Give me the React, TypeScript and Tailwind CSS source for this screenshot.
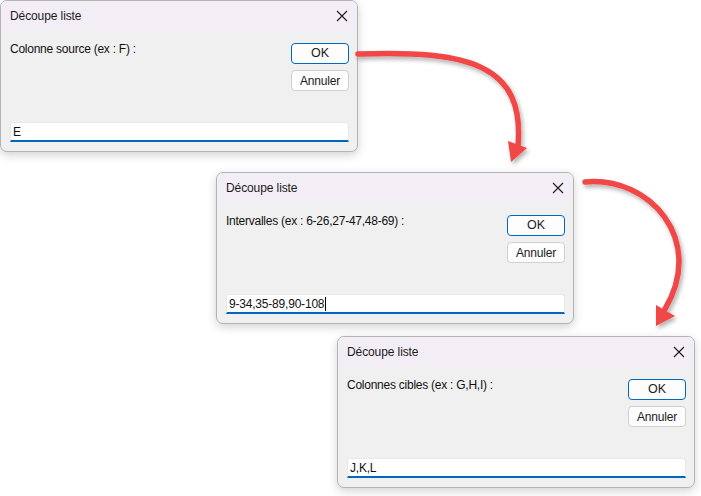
import React from "react";

type DialogProps = {
  pos: string;
  label: string;
  value: string;
  caret?: boolean;
};

function Dialog({ pos, label, value, caret }: DialogProps) {
  return (
    <div
      className={`absolute ${pos} w-[358px] h-[152px] flex flex-col rounded-[7px] border border-[#b4b4b4] bg-[#f0f0f0] overflow-hidden shadow-[0_3px_10px_rgba(0,0,0,0.18)]`}
    >
      <div className="h-[30px] shrink-0 flex items-center justify-between pl-[9px] pr-[8px] bg-[#f3eef6]">
        <span className="text-[12px] text-[#1b1b1b] tracking-[-0.1px]">Découpe liste</span>
        <svg width="12" height="12" viewBox="0 0 12 12" className="mr-[1px]">
          <path d="M1 1 L11 11 M11 1 L1 11" stroke="#1b1b1b" strokeWidth="1.1" />
        </svg>
      </div>
      <div className="flex-1 flex flex-col pl-[9px] pr-[8px] pt-[10px]">
        <div className="flex justify-between">
          <span className="text-[12px] leading-[16px] text-[#111] tracking-[-0.25px]">{label}</span>
          <div className="flex flex-col gap-[6px] mt-[2px]">
            <button className="w-[58px] h-[21px] rounded-[4px] border border-[#0067c0] bg-[#fdfdfd] text-[12.5px] text-[#1b1b1b] leading-none">
              OK
            </button>
            <button className="w-[58px] h-[21px] rounded-[4px] border border-[#d0d0d0] bg-[#fdfdfd] text-[12px] text-[#1b1b1b] leading-none tracking-[-0.2px]">
              Annuler
            </button>
          </div>
        </div>
        <div className="mt-[31px] h-[20px] flex items-center bg-white border border-[#e8e8e8] border-b-2 border-b-[#0067c0] rounded-t-[3px] pl-[2px]">
          <span className="text-[12px] text-[#111] leading-none tracking-[-0.2px]">{value}</span>
          {caret && <span className="w-px h-[14px] bg-black ml-px" />}
        </div>
      </div>
    </div>
  );
}

export default function App() {
  return (
    <div
      className="relative w-[701px] h-[496px] bg-white overflow-hidden"
      style={{ fontFamily: '"Liberation Sans", Arial, sans-serif' }}
    >
      <Dialog pos="left-0 top-0" label="Colonne source (ex : F) :" value="E" />
      <Dialog
        pos="left-[216px] top-[172px]"
        label="Intervalles (ex : 6-26,27-47,48-69) :"
        value="9-34,35-89,90-108"
        caret
      />
      <Dialog pos="left-[337px] top-[336px]" label="Colonnes cibles (ex : G,H,I) :" value="J,K,L" />

      <svg
        className="absolute inset-0 pointer-events-none"
        width="701"
        height="496"
        viewBox="0 0 701 496"
      >
        <defs>
          <filter id="sh" x="-20%" y="-20%" width="140%" height="140%">
            <feDropShadow dx="2" dy="3" stdDeviation="2" floodColor="#000" floodOpacity="0.3" />
          </filter>
        </defs>
        <g filter="url(#sh)">
          <path
            d="M358 54 C470 50 525 65 518 146"
            fill="none"
            stroke="#f24646"
            strokeWidth="5.5"
            strokeLinecap="round"
          />
          <polygon points="508,141 527,148 511,162" fill="#f24646" />
          <path
            d="M585 182 C650 176 706 240 665 309"
            fill="none"
            stroke="#f24646"
            strokeWidth="5.5"
            strokeLinecap="round"
          />
          <polygon points="656,305 675,316 656,326" fill="#f24646" />
        </g>
      </svg>
    </div>
  );
}
